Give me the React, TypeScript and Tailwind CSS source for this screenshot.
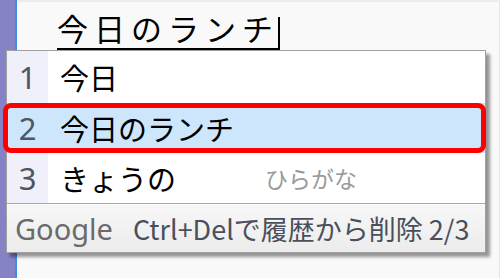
import React from 'react';

const jp = "font-['Noto_Sans_CJK_JP','Noto_Sans',sans-serif]";

const candidates = [
  { n: '1', text: '今日', note: '' },
  { n: '2', text: '今日のランチ', note: '' },
  { n: '3', text: 'きょうの', note: 'ひらがな' },
];

export default function App() {
  return (
    <div className={`relative w-[500px] h-[278px] overflow-hidden flex bg-white ${jp}`}>
      {/* window edge */}
      <div className="w-[15px] bg-[#8682c6]" />
      <div className="w-[2px] bg-[#3d8ee2]" />

      {/* editor with composition string */}
      <div className="flex-1 bg-[#f9f9f9] border-t-2 border-[#ececec] border-r border-r-[#e6e6e6] pl-[40px] pt-[6px]">
        <div className="flex items-end">
          <span className="text-[31px] leading-[40px] tracking-[6px] text-black border-b-2 border-black">
            今日のランチ
          </span>
          <span className="w-[2px] h-[33px] bg-black -ml-[1px]" />
        </div>
      </div>

      {/* candidate window */}
      <div className="absolute left-[6px] top-[50px] w-[480px] flex flex-col bg-white border border-[#a0a0a0] shadow-[4px_4px_3px_rgba(0,0,0,0.4)]">
        {candidates.map((c, i) => {
          const selected = i === 1;
          return (
            <div
              key={c.n}
              className={`relative flex items-center ${i === 0 ? 'h-[52px]' : 'h-[50px]'} ${selected ? 'bg-[#cde6fb]' : 'bg-white'}`}
            >
              <div
                className={`w-[41px] h-full flex items-center justify-center text-[31px] text-[#50555f] font-['Noto_Sans',sans-serif] ${selected ? '' : 'bg-[#f0f0fa]'}`}
              >
                {c.n}
              </div>
              <span className="w-[217px] pl-[12px] text-[29px] leading-none text-black whitespace-nowrap">
                {c.text}
              </span>
              {c.note && (
                <span className="text-[23px] leading-none text-[#9a9a9a]">{c.note}</span>
              )}
              {selected && (
                <div className="absolute -left-[4px] -right-[1px] top-0 bottom-0 border-[5px] border-[#ff0000] rounded-[8px]" />
              )}
            </div>
          );
        })}
        <div className="h-[1px] bg-[#a8a8a8]" />
        <div className="h-[48px] flex items-center bg-gradient-to-b from-[#f7f7f7] to-[#ececec] border-t border-white">
          <span className="pl-[8px] text-[29px] leading-none text-[#6a6a6a] font-['Noto_Sans',sans-serif]">
            Google
          </span>
          <span className="ml-[20px] text-[27px] leading-none text-[#4a4f5c] whitespace-nowrap">
            Ctrl+Delで履歴から削除 2/3
          </span>
        </div>
      </div>
    </div>
  );
}
